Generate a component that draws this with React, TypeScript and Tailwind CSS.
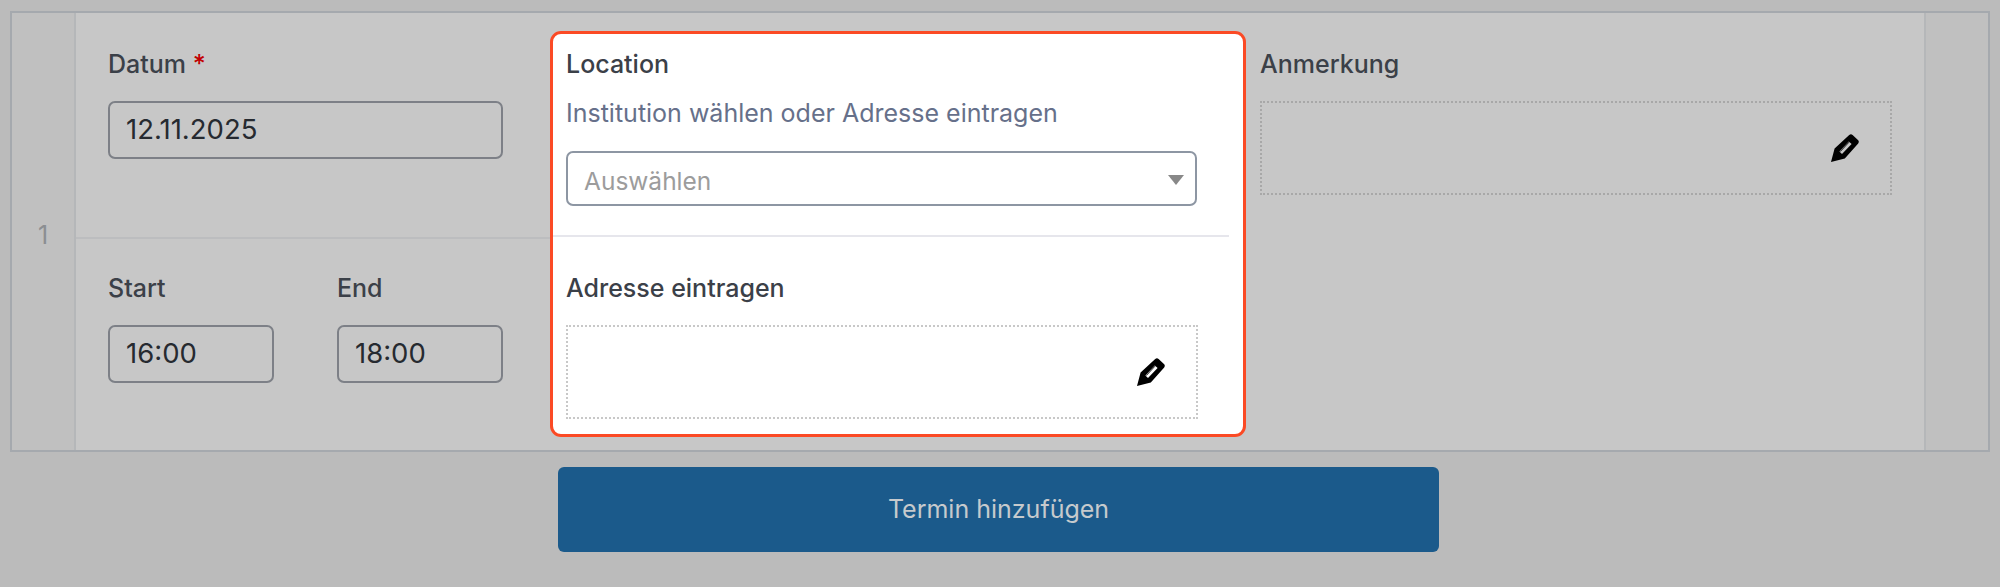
import React from "react";

function Pencil() {
  return (
    <svg width="28" height="28" viewBox="0 0 28 28" className="block">
      <path
        fillRule="evenodd"
        fill="#000"
        d="M18.2 1 Q20 -0.4 21.6 1 L27.2 6.2 Q28.4 7.8 27.2 9.4 L13.8 24.4 L0 28 L3.6 14.6 Z M17.8 7.4 L20.6 10 L11 20 L8.4 17.4 Z"
      />
      <path d="M9.2 17.6 L18 8.2" stroke="#000" strokeWidth="0.9" fill="none" />
    </svg>
  );
}

function Label({ children }: { children: React.ReactNode }) {
  return <div className="text-[25px] leading-[26px] font-medium text-[#3b4048]">{children}</div>;
}

function Field({ value, width }: { value: string; width: string }) {
  return (
    <div className={`mt-[24px] flex h-[58px] items-center rounded-[7px] border-2 border-[#7d8087] pl-[16px] text-[27.5px] text-[#262a30] ${width}`}>
      {value}
    </div>
  );
}

function NoteBox({ bg }: { bg: string }) {
  return (
    <div className={`flex h-[94px] w-[632px] items-center justify-end border-2 border-dotted pr-[31px] ${bg}`}>
      <Pencil />
    </div>
  );
}

export default function App() {
  return (
    <div className="h-[587px] w-[2000px] overflow-hidden bg-[#bbbbbb] pl-[10px] pt-[11px] font-['Inter',sans-serif]">
      <div className="flex h-[441px] w-[1980px] border-2 border-[#a5a9ae] bg-[#c7c7c7]">
        <div className="flex w-[64px] shrink-0 items-center justify-center border-r-2 border-[#b5b7b9] bg-[#c0c0c0] pt-[8px] text-[25px] text-[#8b8e92]">
          1
        </div>

        <div className="flex w-[474px] shrink-0 flex-col">
          <div className="h-[226px] border-b-2 border-[#bcbdbf] pl-[32px] pt-[38px]">
            <Label>
              Datum <span className="text-[#c20000]">*</span>
            </Label>
            <Field value="12.11.2025" width="w-[395px]" />
          </div>
          <div className="flex gap-[63px] pl-[32px] pt-[36px]">
            <div>
              <Label>Start</Label>
              <Field value="16:00" width="w-[166px]" />
            </div>
            <div>
              <Label>End</Label>
              <Field value="18:00" width="w-[166px]" />
            </div>
          </div>
        </div>

        <div className="mt-[18px] h-[406px] w-[696px] shrink-0 rounded-[11px] border-[3px] border-[#fb4a25] bg-white">
          <div className="mr-[14px] h-[203px] border-b-2 border-[#e6e6ec] pl-[13px] pt-[17px]">
            <Label>Location</Label>
            <div className="mt-[23px] text-[25px] leading-[26px] text-[#66708a]">
              Institution wählen oder Adresse eintragen
            </div>
            <div className="relative mt-[25px] flex h-[55px] w-[631px] items-center rounded-[7px] border-2 border-[#8d96a3] pl-[16px] pt-[5px] text-[24.5px] text-[#9c9c9c]">
              Auswählen
              <div className="absolute right-[11px] top-[22px] h-0 w-0 border-x-[8px] border-t-[10px] border-x-transparent border-t-[#888888]" />
            </div>
          </div>
          <div className="pl-[13px] pt-[38px]">
            <Label>Adresse eintragen</Label>
            <div className="mt-[24px]">
              <NoteBox bg="border-[#c8c8c8] bg-white" />
            </div>
          </div>
        </div>

        <div className="flex-1 pl-[14px] pt-[38px]">
          <Label>Anmerkung</Label>
          <div className="mt-[24px]">
            <NoteBox bg="border-[#a8a8a8]" />
          </div>
        </div>

        <div className="w-[64px] shrink-0 border-l-2 border-[#b5b7b9] bg-[#c0c0c0]" />
      </div>

      <div className="ml-[548px] mt-[15px] flex h-[85px] w-[881px] items-center justify-center rounded-[6px] bg-[#1b5a8b] text-[25px] text-[#c6cacd]">
        Termin hinzufügen
      </div>
    </div>
  );
}
